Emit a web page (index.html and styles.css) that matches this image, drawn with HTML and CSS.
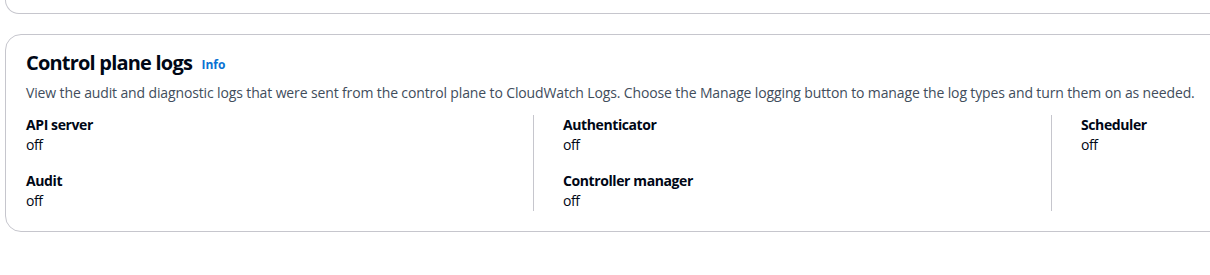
FILE: index.html
```html
<!DOCTYPE html>
<html lang="en">
<head>
    <meta charset="UTF-8">
    <title>Control plane logs</title>
    <link rel="stylesheet" href="styles.css">
</head>
<body>
    <div class="page">
        <div class="card card-prev"></div>

        <div class="card">
            <div class="card-header">
                <h2>Control plane logs <a href="#" class="info">Info</a></h2>
                <p class="desc">View the audit and diagnostic logs that were sent from the control plane to CloudWatch Logs. Choose the Manage logging button to manage the log types and turn them on as needed.</p>
            </div>

            <div class="columns">
                <div class="col">
                    <div class="kv">
                        <div class="key">API server</div>
                        <div class="value">off</div>
                    </div>
                    <div class="kv">
                        <div class="key">Audit</div>
                        <div class="value">off</div>
                    </div>
                </div>
                <div class="col">
                    <div class="kv">
                        <div class="key">Authenticator</div>
                        <div class="value">off</div>
                    </div>
                    <div class="kv">
                        <div class="key">Controller manager</div>
                        <div class="value">off</div>
                    </div>
                </div>
                <div class="col">
                    <div class="kv">
                        <div class="key">Scheduler</div>
                        <div class="value">off</div>
                    </div>
                </div>
            </div>
        </div>
    </div>
</body>
</html>
```

FILE: styles.css
```css
body { margin: 0; background: #fff; font-family: "Open Sans", Arial, sans-serif; color: #000716; overflow: hidden; }
.page { padding-left: 5px; width: 1240px; }
.card { border: 1px solid #c6c6cd; border-radius: 16px; background: #fff; }
.card-prev { height: 13px; border-top: none; border-radius: 0 0 16px 16px; margin-bottom: 20px; }
.card-header { padding: 16px 20px 0 20px; }
h2 { margin: 0; font-size: 20px; line-height: 24px; font-weight: 700; letter-spacing: -0.8px; }
.info { font-size: 12px; font-weight: 700; color: #0972d3; text-decoration: none; margin-left: 5px; vertical-align: 1px; letter-spacing: 0; }
.desc { margin: 6px 0 0 0; font-size: 14px; line-height: 20px; color: #414d5c; letter-spacing: -0.13px; }
.columns { display: grid; grid-template-columns: 507px 518px 518px; padding: 12px 0 20px 20px; }
.col { display: flex; flex-direction: column; gap: 16px; }
.col + .col { border-left: 1px solid #c6c6cd; padding-left: 29px; }
.kv { font-size: 14px; line-height: 20px; letter-spacing: -0.4px; }
.key { font-weight: 700; }
```
